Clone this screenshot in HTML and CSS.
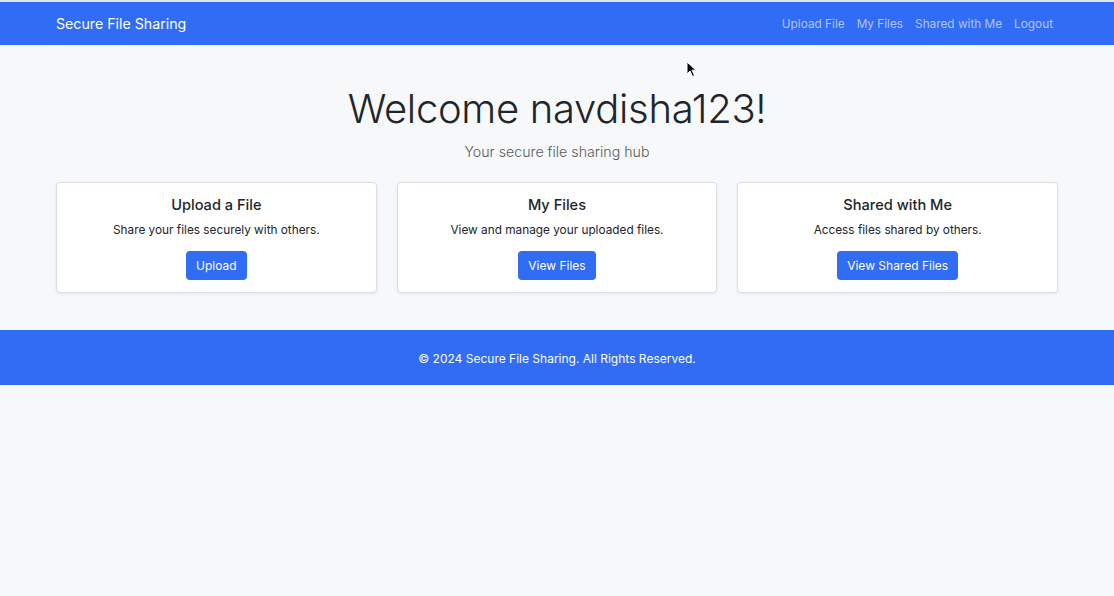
FILE: index.html
```html
<!DOCTYPE html>
<html lang="en">
<head>
<meta charset="utf-8">
<title>Secure File Sharing</title>
<link rel="stylesheet" href="styles.css">
</head>
<body>
<div class="topstrip"></div>
<nav class="navbar">
  <div class="container nav-inner">
    <a class="brand" href="#">Secure File Sharing</a>
    <ul class="nav-links">
      <li><a href="#">Upload File</a></li>
      <li><a href="#">My Files</a></li>
      <li><a href="#">Shared with Me</a></li>
      <li><a href="#">Logout</a></li>
    </ul>
  </div>
</nav>
<main class="container main">
  <h1 class="welcome">Welcome navdisha123!</h1>
  <p class="lead">Your secure file sharing hub</p>
  <div class="cards">
    <div class="card">
      <h5 class="card-title">Upload a File</h5>
      <p class="card-text">Share your files securely with others.</p>
      <a class="btn" href="#">Upload</a>
    </div>
    <div class="card">
      <h5 class="card-title">My Files</h5>
      <p class="card-text">View and manage your uploaded files.</p>
      <a class="btn" href="#">View Files</a>
    </div>
    <div class="card">
      <h5 class="card-title">Shared with Me</h5>
      <p class="card-text">Access files shared by others.</p>
      <a class="btn" href="#">View Shared Files</a>
    </div>
  </div>
</main>
<footer class="footer">
  <p>&copy; 2024 Secure File Sharing. All Rights Reserved.</p>
</footer>
<svg class="cursor" width="12" height="17" viewBox="0 0 12 17"><path d="M1 1 L1 13 L4 10 L6.5 15.5 L8.5 14.5 L6 9.2 L10 9.2 Z" fill="#000" stroke="#fff" stroke-width="1"/></svg>
</body>
</html>
```
FILE: styles.css
```css
* { box-sizing: border-box; }
html, body { margin: 0; padding: 0; }
body {
  background: #f7f8fa;
  font-family: Inter, "Noto Sans", "Liberation Sans", sans-serif;
  color: #212529;
  min-height: 596px;
  position: relative;
}
.topstrip {
  height: 2px;
  background: #e4e5e8;
}
.container {
  width: 1002px;
  margin: 0 auto;
}
.navbar {
  background: #316cf4;
  height: 43px;
}
.nav-inner {
  display: flex;
  align-items: center;
  justify-content: space-between;
  height: 100%;
}
.brand {
  color: #fff;
  text-decoration: none;
  font-size: 14.2px;
  line-height: 20px;
  font-weight: 400;
}
.nav-links {
  list-style: none;
  display: flex;
  gap: 12px;
  margin: 0 0 2px;
  padding: 0 5px 0 0;
  line-height: 20px;
}
.nav-links a {
  color: rgba(255, 255, 255, 0.62);
  text-decoration: none;
  font-size: 11.8px;
}
.main {
  text-align: center;
}
.welcome {
  margin: 37px 0 0;
  font-size: 40px;
  font-weight: 300;
  line-height: 54px;
  letter-spacing: -0.3px;
}
.lead {
  margin: 5px 0 0;
  font-size: 14.2px;
  line-height: 22px;
  font-weight: 300;
  color: #555a60;
}
.cards {
  margin-top: 19px;
  display: grid;
  grid-template-columns: repeat(3, 1fr);
  gap: 20px;
}
.card {
  background: #fff;
  border: 1px solid #dcdfe3;
  border-radius: 4px;
  box-shadow: 0 1px 3px rgba(0, 0, 0, 0.08);
  padding: 12px 12px 12px;
  height: 111px;
  display: flex;
  flex-direction: column;
  align-items: center;
}
.card-title {
  margin: 0;
  font-size: 14.6px;
  font-weight: 500;
  line-height: 20px;
}
.card-text {
  margin: 6px 0 0;
  font-size: 11.8px;
  line-height: 18px;
}
.btn {
  margin-top: 12px;
  display: inline-block;
  background: #316cf4;
  color: #fff;
  text-decoration: none;
  font-size: 12px;
  line-height: 17px;
  padding: 6px 10px;
  border-radius: 4px;
}
.footer {
  margin-top: 37px;
  background: #316cf4;
  height: 55px;
  display: flex;
  align-items: center;
  justify-content: center;
}
.footer p {
  margin: 0;
  color: #fff;
  font-size: 12px;
  line-height: 18px;
  padding-top: 2px;
}
.cursor {
  position: absolute;
  left: 686px;
  top: 61px;
}
```
